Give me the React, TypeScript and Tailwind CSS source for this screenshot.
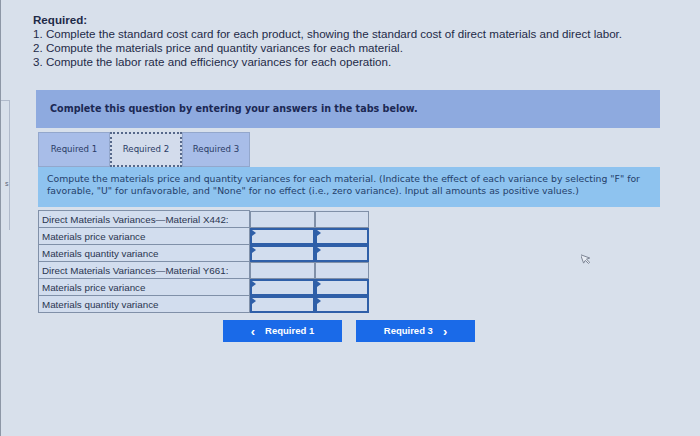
import React from "react";

function InputCell() {
  return (
    <div className="relative h-[17px] border-2 border-[#2f5fa8]">
      <span className="absolute left-0 top-0 h-0 w-0 border-b-[3px] border-l-[4px] border-t-[3px] border-b-transparent border-l-[#2f5fa8] border-t-transparent" />
    </div>
  );
}

export default function App() {
  const rows: { label: string; input: boolean }[] = [
    { label: "Direct Materials Variances\u2014Material X442:", input: false },
    { label: "Materials price variance", input: true },
    { label: "Materials quantity variance", input: true },
    { label: "Direct Materials Variances\u2014Material Y661:", input: false },
    { label: "Materials price variance", input: true },
    { label: "Materials quantity variance", input: true },
  ];
  return (
    <div className="relative h-[436px] w-[700px] overflow-hidden border-l border-[#8d97a6] bg-[#d8e0eb] text-[#1e2a48]" style={{ fontFamily: "'Liberation Sans', Arial, sans-serif" }}>
      <div className="absolute left-0 top-[100px] h-[130px] w-[9px] border-r border-t border-[#b0bacb]" />
      <div className="absolute left-[4px] top-[179px] text-[7px] text-[#5a6478]">s</div>
      <div className="pl-[32px] pt-[13px] text-[11.6px] leading-[14px]">
        <div className="font-bold">Required:</div>
        <div>1. Complete the standard cost card for each product, showing the standard cost of direct materials and direct labor.</div>
        <div>2. Compute the materials price and quantity variances for each material.</div>
        <div>3. Compute the labor rate and efficiency variances for each operation.</div>
      </div>
      <div className="ml-[35px] mt-[21px] w-[624px]" style={{ fontFamily: "'DejaVu Sans', Verdana, sans-serif" }}>
        <div className="flex h-[38px] items-center bg-[#8eaadf] pl-[14px] text-[9.6px] font-bold text-[#1b2854]">
          Complete this question by entering your answers in the tabs below.
        </div>
        <div className="mt-[4px] flex pl-[2px] text-[8.6px] text-[#2a3b66]">
          <div className="flex h-[35px] w-[72px] items-center justify-center border border-[#93a7cc] bg-[#a8bde8]">Required 1</div>
          <div className="flex h-[35px] w-[72px] items-center justify-center border-2 border-dotted border-[#56688a] bg-[#d3dcec]">Required 2</div>
          <div className="flex h-[35px] w-[68px] items-center justify-center border border-[#93a7cc] bg-[#a8bde8]">Required 3</div>
        </div>
        <div className="ml-[2px] h-[40px] bg-[#8ec3ef] px-[9px] pt-[6px] text-[9.3px] leading-[12px] text-[#24406a]">
          Compute the materials price and quantity variances for each material. (Indicate the effect of each variance by selecting "F" for favorable, "U" for unfavorable, and "None" for no effect (i.e., zero variance). Input all amounts as positive values.)
        </div>
        <table className="ml-[2px] mt-[3px] border-collapse bg-[#d2ddee] text-[9.8px] text-[#2a3550]" style={{ fontFamily: "'Liberation Sans', Arial, sans-serif" }}>
          <tbody>
            {rows.map((r, i) => (
              <tr key={i} className="h-[17px]">
                <td className="w-[211px] border border-[#8090a8] px-[3px] leading-[15px]">{r.label}</td>
                <td className="w-[65px] p-0">
                  {r.input ? <InputCell /> : <div className="h-[17px] border border-[#8090a8]" />}
                </td>
                <td className="w-[54px] p-0">
                  {r.input ? <InputCell /> : <div className="h-[17px] border border-[#8090a8]" />}
                </td>
              </tr>
            ))}
          </tbody>
        </table>
        <div className="mt-[7px] flex gap-[14px] pl-[187px] text-[9.5px] font-bold text-white" style={{ fontFamily: "'Liberation Sans', Arial, sans-serif" }}>
          <div className="flex h-[22px] w-[119px] items-center justify-center gap-[10px] bg-[#1a6ae8]">
            <span className="text-[13px] leading-none">&#8249;</span>
            <span>Required 1</span>
          </div>
          <div className="flex h-[22px] w-[119px] items-center justify-center gap-[10px] bg-[#1a6ae8]">
            <span>Required 3</span>
            <span className="text-[13px] leading-none">&#8250;</span>
          </div>
        </div>
      </div>
      <svg className="absolute left-[580px] top-[252px]" width="10" height="13" viewBox="0 0 10 13">
        <path d="M1 1 L1 10 L3.5 8 L5.5 12 L7 11.3 L5 7.3 L8.5 7.3 Z" fill="#e8edf4" stroke="#7c8594" strokeWidth="0.9" transform="rotate(-20 5 6)" />
      </svg>
    </div>
  );
}
